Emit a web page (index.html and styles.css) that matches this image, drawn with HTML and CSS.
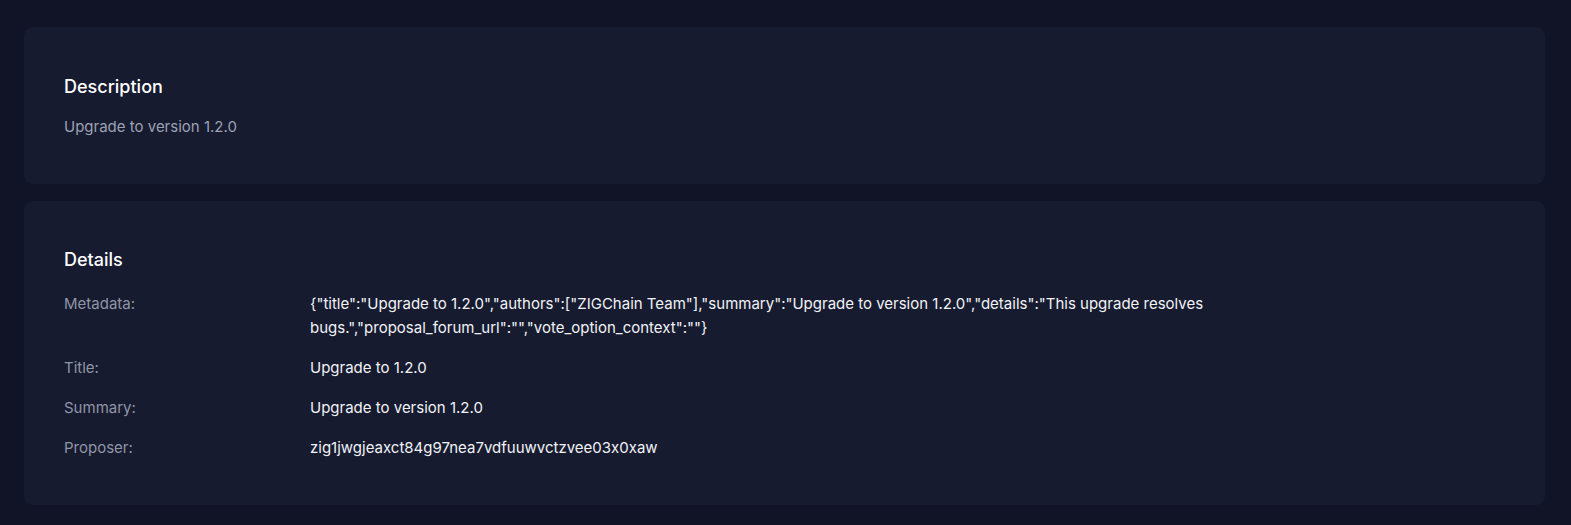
FILE: index.html
```html
<!DOCTYPE html>
<html lang="en">
<head>
<meta charset="utf-8">
<title>Proposal</title>
<link rel="stylesheet" href="styles.css">
</head>
<body>
<main class="page">
  <section class="card card-desc">
    <h2 class="card-title">Description</h2>
    <p class="desc-text">Upgrade to version 1.2.0</p>
  </section>
  <section class="card card-details">
    <h2 class="card-title">Details</h2>
    <dl class="details">
      <div class="row">
        <dt class="label">Metadata:</dt>
        <dd class="value">{"title":"Upgrade to 1.2.0","authors":["ZIGChain Team"],"summary":"Upgrade to version 1.2.0","details":"This upgrade resolves bugs.","proposal_forum_url":"","vote_option_context":""}</dd>
      </div>
      <div class="row">
        <dt class="label">Title:</dt>
        <dd class="value">Upgrade to 1.2.0</dd>
      </div>
      <div class="row">
        <dt class="label">Summary:</dt>
        <dd class="value">Upgrade to version 1.2.0</dd>
      </div>
      <div class="row">
        <dt class="label">Proposer:</dt>
        <dd class="value">zig1jwgjeaxct84g97nea7vdfuuwvctzvee03x0xaw</dd>
      </div>
    </dl>
  </section>
</main>
</body>
</html>
```

FILE: styles.css
```css
* { box-sizing: border-box; }
html, body { margin: 0; padding: 0; }
body {
  background: #111427;
  font-family: Inter, "Noto Sans", sans-serif;
  font-feature-settings: "calt" 0;
  color: #e6e8ee;
}
.page {
  padding: 27px 26px 0 24px;
  display: flex;
  flex-direction: column;
  gap: 17px;
}
.card {
  background: #171b2f;
  border-radius: 9px;
  padding: 46px 40px 45px;
}
.card-details {
  padding: 45px 40px 45px;
}
.card-title {
  margin: 0;
  font-size: 18px;
  line-height: 28px;
  font-weight: 500;
  color: #ffffff;
}
.desc-text {
  margin: 14px 0 0;
  font-size: 15px;
  line-height: 24px;
  color: #9ca1b3;
}
.details {
  margin: 18px 0 0;
  display: flex;
  flex-direction: column;
  gap: 16px;
}
.row {
  display: flex;
}
.label {
  width: 246px;
  flex: none;
  margin: 0;
  font-size: 15px;
  line-height: 24px;
  color: #8f95a7;
}
.value {
  margin: 0;
  max-width: 900px;
  font-size: 15px;
  line-height: 24px;
  color: #f1f2f6;
}
```
